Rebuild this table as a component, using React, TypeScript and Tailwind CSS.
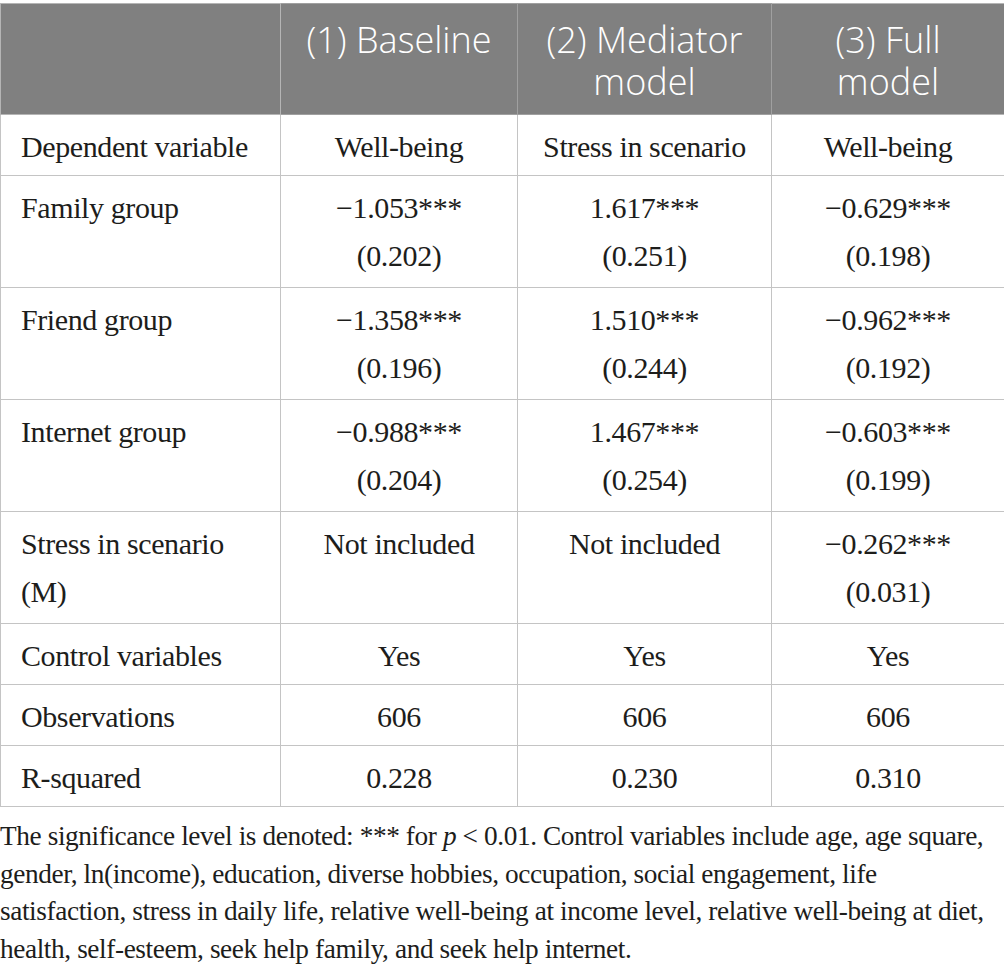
import React from 'react';

type Row = {
  label: React.ReactNode;
  cells: string[][];
  tall?: boolean;
};

const rows: Row[] = [
  { label: 'Dependent variable', cells: [['Well-being'], ['Stress in scenario'], ['Well-being']] },
  { label: 'Family group', tall: true, cells: [['−1.053***', '(0.202)'], ['1.617***', '(0.251)'], ['−0.629***', '(0.198)']] },
  { label: 'Friend group', tall: true, cells: [['−1.358***', '(0.196)'], ['1.510***', '(0.244)'], ['−0.962***', '(0.192)']] },
  { label: 'Internet group', tall: true, cells: [['−0.988***', '(0.204)'], ['1.467***', '(0.254)'], ['−0.603***', '(0.199)']] },
  {
    label: (
      <>
        Stress in scenario
        <br />
        (M)
      </>
    ),
    tall: true,
    cells: [['Not included'], ['Not included'], ['−0.262***', '(0.031)']],
  },
  { label: 'Control variables', cells: [['Yes'], ['Yes'], ['Yes']] },
  { label: 'Observations', cells: [['606'], ['606'], ['606']] },
  { label: 'R-squared', cells: [['0.228'], ['0.230'], ['0.310']] },
];

const App = () => {
  return (
    <div className="bg-white w-[1004px] min-h-[973px] pt-[3px] text-[#1d1d1b]">
      <table className="table-fixed border-collapse w-[1004px] font-['Liberation_Serif',serif] text-[30px] tracking-[-0.4px]">
        <colgroup>
          <col className="w-[280px]" />
          <col className="w-[237px]" />
          <col className="w-[254px]" />
          <col className="w-[233px]" />
        </colgroup>
        <thead>
          <tr className="h-[111px] bg-[#808080]">
            <th className="border border-[#b5b5b5]" />
            <th className="border border-[#a0a0a0] align-top pt-[15px] font-['Open_Sans',sans-serif] text-[36px] leading-[42px] font-light text-white tracking-normal">
              (1) Baseline
            </th>
            <th className="border border-[#a0a0a0] align-top pt-[15px] font-['Open_Sans',sans-serif] text-[36px] leading-[42px] font-light text-white tracking-normal">
              (2) Mediator
              <br />
              model
            </th>
            <th className="border border-[#b5b5b5] align-top pt-[15px] font-['Open_Sans',sans-serif] text-[36px] leading-[42px] font-light text-white tracking-normal">
              (3) Full
              <br />
              model
            </th>
          </tr>
        </thead>
        <tbody>
          {rows.map((row, i) => (
            <tr key={i} className={row.tall ? 'h-[112px]' : 'h-[61px]'}>
              <td className="border border-[#c4c4c4] align-top pt-[8px] pl-[20px] leading-[48px]">{row.label}</td>
              {row.cells.map((lines, j) => (
                <td key={j} className="border border-[#c4c4c4] align-top pt-[8px] text-center leading-[48px]">
                  {lines.map((l, k) => (
                    <div key={k}>{l}</div>
                  ))}
                </td>
              ))}
            </tr>
          ))}
        </tbody>
      </table>

      <div className="mt-[11px] font-['Liberation_Serif',serif] text-[27.3px] leading-[37.5px] tracking-[-0.4px] whitespace-nowrap">
        <div>
          The significance level is denoted: *** for <i>p</i> &lt; 0.01. Control variables include age, age square,
        </div>
        <div>gender, ln(income), education, diverse hobbies, occupation, social engagement, life</div>
        <div>satisfaction, stress in daily life, relative well-being at income level, relative well-being at diet,</div>
        <div>health, self-esteem, seek help family, and seek help internet.</div>
      </div>
    </div>
  );
};

export default App;
